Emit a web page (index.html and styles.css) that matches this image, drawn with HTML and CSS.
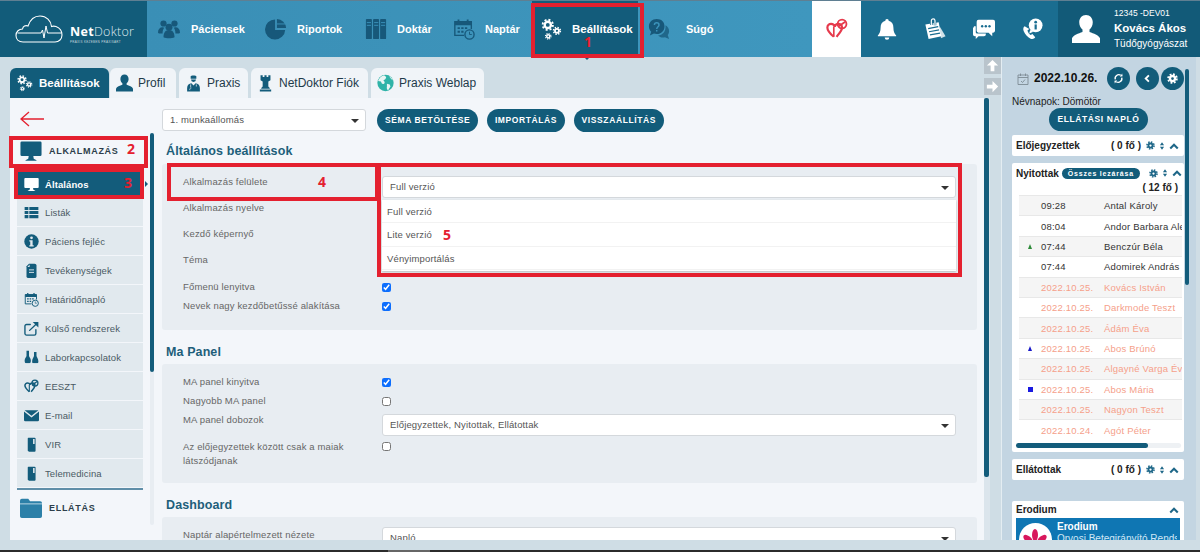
FILE: index.html
```html
<!DOCTYPE html>
<html lang="hu">
<head>
  <meta charset="UTF-8">
  <title>NetDoktor - Beállítások</title>
  <link rel="stylesheet" href="styles.css">
</head>
<body>
  <!-- icon set -->
  <svg class="defs" width="0" height="0">
    <symbol id="i-gears" viewBox="0 0 24 24">
      <g fill="none" stroke="currentColor">
        <circle cx="8.5" cy="7.5" r="3.4" stroke-width="2.6"/>
        <circle cx="8.5" cy="7.5" r="5.6" stroke-width="2" stroke-dasharray="2.2 2.2"/>
        <circle cx="18.5" cy="14" r="2.2" stroke-width="2"/>
        <circle cx="18.5" cy="14" r="3.8" stroke-width="1.6" stroke-dasharray="1.5 1.5"/>
        <circle cx="9" cy="20" r="1.7" stroke-width="1.6"/>
        <circle cx="9" cy="20" r="3" stroke-width="1.3" stroke-dasharray="1.2 1.16"/>
      </g>
    </symbol>
    <symbol id="i-people" viewBox="0 0 24 24">
      <g fill="currentColor">
        <circle cx="6" cy="6" r="3.4"/><circle cx="18" cy="6" r="3.4"/><circle cx="12" cy="10" r="3.8"/>
        <path d="M0 16c0-4 2-6 5-6l2 .6c-1.500 1.500-2 3.400-2 6.400H1zM24 16c0-4-2-6-5-6l-2 .6c1.500 1.500 2 3.400 2 6.400h4z"/>
        <path d="M6 21c0-5 2-8 6-8s6 3 6 8c-3 1.500-9 1.500-12 0z"/>
      </g>
    </symbol>
    <symbol id="i-pie" viewBox="0 0 24 24">
      <path fill="currentColor" d="M11 1.500a11 11 0 1 0 11 11.500H11zM13 1v10h10A10.500 10.500 0 0 0 13 1z"/>
      <path stroke="#3b93bb" stroke-width="1" d="M13 6.500h9"/>
    </symbol>
    <symbol id="i-binders" viewBox="0 0 24 24">
      <g fill="currentColor">
        <rect x="1" y="1" width="6.500" height="22" rx="1"/><rect x="8.800" y="1" width="6.500" height="22" rx="1"/><rect x="16.500" y="1" width="6.500" height="22" rx="1"/>
      </g>
      <path stroke="#3b93bb" stroke-width="1" d="M2 5h4.500M2 8h4.500M10 5h4.500M10 8h4.500M17.500 5H22M17.500 8H22"/>
    </symbol>
    <symbol id="i-cal" viewBox="0 0 24 24">
      <path fill="none" stroke="currentColor" stroke-width="1.500" d="M12 19H2V4h18v8"/>
      <path fill="currentColor" d="M2 4h18v4H2zM5 1.500h2V6H5zM15 1.500h2V6h-2zM5 10h2.500v2H5zM9 10h2.500v2H9zM13 10h2.500v2H13zM5 14h2.500v2H5zM9 14h2.500v2H9z"/>
      <circle cx="18" cy="18" r="5" fill="none" stroke="currentColor" stroke-width="1.500"/>
      <path fill="none" stroke="currentColor" d="M18 15v3h2.500"/>
    </symbol>
    <symbol id="i-help" viewBox="0 0 24 24">
      <path fill="currentColor" d="M9.500 1C4.500 1 1 4.500 1 9c0 2.500 1 4.500 2.500 6L2 19l4.500-2c1 .4 2 .5 3 .5 5 0 8.500-3.500 8.500-8.500S14.500 1 9.500 1z"/>
      <path fill="currentColor" opacity=".75" d="M19 8c2.500 1.500 4 3.500 4 6.500 0 1.500-.5 3-1.500 4L23 23l-4.500-2c-3 .8-6-.2-7.500-2 4.500 0 9-4 8-11z"/>
      <path fill="none" stroke="#3b93bb" stroke-width="1.600" d="M7 7.500C7 4.500 12 4.500 12 7.500c0 2-2.500 2-2.500 4.500M9.500 13v1.600"/>
    </symbol>
    <symbol id="i-heart" viewBox="0 0 24 24">
      <path fill="none" stroke="currentColor" stroke-width="2.400" d="M8.500 20.500C4 16.500 1.500 13.500 1.500 10.500 1.500 8 3.500 6.500 5.500 6.500s3.500 1 4 3c.5-2 2-3 4-3s4 1.500 4 4c0 3-3 6-6 10"/>
      <path fill="none" stroke="currentColor" stroke-width="1.800" d="M8.500 20.500v-11"/>
      <circle cx="17.500" cy="6.500" r="4.800" fill="none" stroke="currentColor" stroke-width="2"/>
      <path stroke="currentColor" stroke-width="2" d="M14 9l7-5"/>
    </symbol>
    <symbol id="i-bell" viewBox="0 0 24 24">
      <path fill="currentColor" d="M12 1a1.800 1.800 0 0 1 1.800 2C17.500 4 19 7 19 10.500c0 4 1 6.500 3 8.500v1H2v-1c2-2 3-4.500 3-8.500C5 7 6.500 4 10.200 3A1.800 1.800 0 0 1 12 1zM9.500 21.200h5a2.500 2.500 0 0 1-5 0z"/>
    </symbol>
    <symbol id="i-note" viewBox="0 0 24 24">
      <path fill="currentColor" opacity=".8" d="M17 9l6.500 11-5 2z"/>
      <path fill="currentColor" d="M1.500 7L16 4.500 19 20 5 23z"/>
      <path fill="none" stroke="#1a6d90" stroke-width="1.300" d="M4.500 11.500l11-2M5.500 15l11-2M6.500 18.500l11-2"/>
      <path fill="none" stroke="#1a6d90" stroke-width="2.800" d="M8 7.500V3a2 2 0 0 1 4 0v5"/>
      <path fill="none" stroke="currentColor" stroke-width="1.300" d="M8 7.500V3a2 2 0 0 1 4 0v5"/>
    </symbol>
    <symbol id="i-chat" viewBox="0 0 24 24">
      <path fill="currentColor" d="M6 2h16a2 2 0 0 1 2 2v10a2 2 0 0 1-2 2h-1v4l-4-4H6a2 2 0 0 1-2-2V4a2 2 0 0 1 2-2z"/>
      <path fill="currentColor" d="M1 9h2v6.500a1.500 1.500 0 0 0 1.500 1.500H14v1a2 2 0 0 1-2 2H6l-3 3v-3H2a2 2 0 0 1-2-2v-7a1 1 0 0 1 1-1z"/>
      <g fill="#1a6d90"><circle cx="10" cy="9" r="1.300"/><circle cx="14" cy="9" r="1.300"/><circle cx="18" cy="9" r="1.300"/></g>
    </symbol>
    <symbol id="i-phone" viewBox="0 0 24 24">
      <path fill="currentColor" d="M4 9c-1.500 1-2 3-1 5.500C4.500 18 7 21 10.500 22.500c2 .8 4 .3 5-1.500l-3-3.500-2 1C9 17.500 7.500 15.500 7 13.500l2-1.500z"/>
      <circle cx="16" cy="8" r="7.500" fill="currentColor"/>
      <path fill="currentColor" d="M10 13l-1 4 4.500-2z"/>
      <rect x="14.800" y="7" width="2.400" height="5.500" fill="#1a6d90"/><circle cx="16" cy="4.500" r="1.500" fill="#1a6d90"/>
    </symbol>
    <symbol id="i-user" viewBox="0 0 24 24">
      <path fill="currentColor" d="M12 0c3.500 0 5.800 2.600 5.800 6.300 0 2.700-1.200 5-2.800 6.200v2c3.500 1.200 8 2.800 9 5.500V24H0v-4c1-2.700 5.500-4.300 9-5.500v-2C7.400 11.300 6.200 9 6.200 6.300 6.200 2.600 8.500 0 12 0z"/>
    </symbol>
    <symbol id="i-doctor" viewBox="0 0 24 24">
      <path fill="currentColor" d="M8 2.500C8 1 16 1 16 2.500V6H8zM8.500 7h7a3.500 3.500 0 0 1-7 0zM3 24v-5c0-4 3-6 6-6.500l3 3 3-3c3 .5 6 2.500 6 6.500v5z"/>
      <path fill="none" stroke="#eef3f7" stroke-width="1" d="M8 14v4M16 14v3M7 22a2 2 0 0 1 2-3"/>
    </symbol>
    <symbol id="i-rook" viewBox="0 0 24 24">
      <path fill="currentColor" d="M5 1h3v2.500h2.500V1h3v2.500H16V1h3v7l-3 2v7l2 2v1H6v-1l2-2v-7L5 8zM4 21h16v3H4z"/>
    </symbol>
    <symbol id="i-globe" viewBox="0 0 24 24">
      <circle cx="12" cy="12" r="11.500" fill="#2fb3a8"/>
      <path fill="#e9f5f4" d="M10 1C6 2 3 5 1.500 9l4 1 1.500 3 3 .5 1-3-2-2 3-2 1-3zM14 13l4 1 1 3-3 5c-2 .5-2.500-3-2-5zM17 2.500l3 4 2.500 2C21.500 6 20 3.800 17 2.500z"/>
    </symbol>
    <symbol id="i-monitor" viewBox="0 0 24 24">
      <path fill="currentColor" d="M2 1.500h20a1.500 1.500 0 0 1 1.500 1.500v13a1.500 1.500 0 0 1-1.500 1.500H2A1.500 1.500 0 0 1 .5 16V3A1.500 1.500 0 0 1 2 1.500zM9.500 17.500h5l.5 3 3 1.500v.5H6V22l3-1.500z"/>
    </symbol>
    <symbol id="i-list" viewBox="0 0 24 24">
      <path fill="currentColor" d="M1 3h6v5H1zM8.500 3H23v5H8.500zM1 9.500h6v5H1zM8.500 9.500H23v5H8.500zM1 16h6v5H1zM8.500 16H23v5H8.500z"/>
    </symbol>
    <symbol id="i-info" viewBox="0 0 24 24">
      <circle cx="12" cy="12" r="11.500" fill="currentColor"/>
      <path fill="#e1e9ee" d="M10 10h3.800v8H15.500v2h-7v-2H10v-6H8.500v-2z"/><circle cx="12" cy="6" r="2.200" fill="#e1e9ee"/>
    </symbol>
    <symbol id="i-doc" viewBox="0 0 24 24">
      <path fill="currentColor" d="M8 1h9a3 3 0 0 1 3 3v17a3 3 0 0 1-3 3H7a3 3 0 0 1-3-3V5z"/>
      <path stroke="#e1e9ee" stroke-width="1.500" d="M8 11h8M8 15h8"/>
      <path fill="#e1e9ee" d="M9 2.500v4H5.500z"/>
    </symbol>
    <symbol id="i-link" viewBox="0 0 24 24">
      <path fill="none" stroke="currentColor" stroke-width="2.200" stroke-linecap="round" d="M19 14v6a2.500 2.500 0 0 1-2.500 2.500H4A2.500 2.500 0 0 1 1.500 20V8A2.500 2.500 0 0 1 4 5.500h6M9 15L21 3.500"/>
      <path fill="currentColor" d="M14 1.500h9v9z"/>
    </symbol>
    <symbol id="i-lab" viewBox="0 0 24 24">
      <path fill="currentColor" d="M4 1h4v8c0 2 3 4 3 8 0 4-2 5-5 5s-5-1-5-5c0-4 3-6 3-8zM16 3h4v6c0 2 3 5 3 9s-2 4-5 4-5 0-5-4 3-7 3-9z"/>
      <path fill="#e1e9ee" d="M0 22.500h24V21H0z"/>
    </symbol>
    <symbol id="i-mail" viewBox="0 0 24 24">
      <path fill="currentColor" d="M1 3.500h22L12 12.500zM0 5.500l12 9.500 12-9.500V19a2 2 0 0 1-2 2H2a2 2 0 0 1-2-2z"/>
    </symbol>
    <symbol id="i-device" viewBox="0 0 24 24">
      <path fill="currentColor" d="M7 1h10a1.500 1.500 0 0 1 1.500 1.500V22a1.500 1.500 0 0 1-1.500 1.500H8L6 22V2.500A1.500 1.500 0 0 1 7 1z"/>
      <path fill="#e1e9ee" d="M14.500 3H17v8h-2.500z"/>
    </symbol>
    <symbol id="i-folder" viewBox="0 0 24 24">
      <path fill="currentColor" d="M2 2h7l2 2.500h11A2 2 0 0 1 24 6.500V21a2 2 0 0 1-2 2H2a2 2 0 0 1-2-2V4a2 2 0 0 1 2-2z"/>
      <path stroke="#e9f5fb" stroke-width=".8" d="M0 7.500h24"/>
    </symbol>
    <symbol id="i-cog" viewBox="0 0 24 24">
      <g fill="none" stroke="currentColor">
        <circle cx="12" cy="12" r="5.500" stroke-width="5"/>
        <circle cx="12" cy="12" r="9.500" stroke-width="4" stroke-dasharray="4 3.460"/>
      </g>
    </symbol>
    <symbol id="i-sort" viewBox="0 0 12 24">
      <path fill="currentColor" d="M6 3l5 7H1zM6 21l-5-7h10z"/>
    </symbol>
    <symbol id="i-up" viewBox="0 0 24 24">
      <path fill="none" stroke="currentColor" stroke-width="5" d="M3 18l9-9 9 9"/>
    </symbol>
    <symbol id="i-sync" viewBox="0 0 24 24">
      <path fill="none" stroke="currentColor" stroke-width="3" d="M5 14a8 8 0 0 1 12-9M19 10a8 8 0 0 1-12 9"/>
      <path fill="currentColor" d="M15 8l6-1-1-6zM9 16l-6 1 1 6z"/>
    </symbol>
    <symbol id="i-today" viewBox="0 0 24 24">
      <path fill="none" stroke="currentColor" stroke-width="1.800" d="M2 4h20v19H2zM2 9h20M7 1v5M17 1v5M8 16l3 3 5-6"/>
    </symbol>
  </svg>

  <header class="topbar">
    <a class="logo">
      <svg class="logo-cloud" viewBox="0 0 48 28" width="48" height="28">
        <path fill="none" stroke="#fff" stroke-width="1.100" d="M8 27C3.500 27 1 24 1 20.500 1 16.500 4 14 7.500 14 8 11 10.500 10 13 11 15 5 19.500 1 25 1c6.500 0 11 5 11.500 10.500 1.500-.5 3-.5 4.500 0 4 1.500 6 5 6 8.500 0 4-3 7-7 7z"/>
        <path fill="none" stroke="#fff" stroke-width="1" d="M2.500 18H26l1.500-3 1.500 8 2-12 1.500 7H46"/>
      </svg>
      <span class="logo-text">
        <span class="logo-name"><b>Net</b>Doktor</span>
        <span class="logo-sub">PRAXIS KEZEBEN PRAXISÁRT</span>
      </span>
    </a>
    <nav class="mainnav">
      <a class="nav-item w-pac"><svg><use href="#i-people"/></svg>Páciensek</a>
      <a class="nav-item w-rip"><svg><use href="#i-pie"/></svg>Riportok</a>
      <a class="nav-item w-dok"><svg><use href="#i-binders"/></svg>Doktár</a>
      <a class="nav-item w-nap"><svg><use href="#i-cal"/></svg>Naptár</a>
      <a class="nav-item active"><svg><use href="#i-gears"/></svg>Beállítások</a>
      <a class="nav-item w-sug"><svg><use href="#i-help"/></svg>Súgó</a>
    </nav>
    <div class="heart-box"><svg><use href="#i-heart"/></svg></div>
    <div class="tools">
      <svg><use href="#i-bell"/></svg>
      <svg><use href="#i-note"/></svg>
      <svg><use href="#i-chat"/></svg>
      <svg><use href="#i-phone"/></svg>
    </div>
    <div class="user">
      <svg><use href="#i-user"/></svg>
      <div class="user-info">
        <span class="user-id">12345 -DEV01</span>
        <span class="user-name">Kovács Ákos</span>
        <span class="user-spec">Tüdőgyógyászat</span>
      </div>
    </div>
  </header>

  <div class="workspace">
    <section class="page">
      <div class="tabs">
        <a class="tab active t-1"><svg><use href="#i-gears"/></svg>Beállítások</a>
        <a class="tab t-2"><svg><use href="#i-user"/></svg>Profil</a>
        <a class="tab t-3"><svg><use href="#i-doctor"/></svg>Praxis</a>
        <a class="tab t-4"><svg><use href="#i-rook"/></svg>NetDoktor Fiók</a>
        <a class="tab t-5"><svg><use href="#i-globe"/></svg>Praxis Weblap</a>
      </div>
      <div class="panel">
        <aside class="sidebar">
          <svg class="back" viewBox="0 0 24 16" width="24" height="16"><path fill="none" stroke="#e4202f" stroke-width="1.300" d="M24 8H1M9 1L1 8l8 7"/></svg>
          <div class="group"><svg><use href="#i-monitor"/></svg>ALKALMAZÁS</div>
          <ul class="menu">
            <li class="selected"><svg><use href="#i-monitor"/></svg>Általános</li>
            <li><svg><use href="#i-list"/></svg>Listák</li>
            <li><svg><use href="#i-info"/></svg>Páciens fejléc</li>
            <li><svg><use href="#i-doc"/></svg>Tevékenységek</li>
            <li><svg><use href="#i-cal"/></svg>Határidőnapló</li>
            <li><svg><use href="#i-link"/></svg>Külső rendszerek</li>
            <li><svg><use href="#i-lab"/></svg>Laborkapcsolatok</li>
            <li><svg><use href="#i-heart"/></svg>EESZT</li>
            <li><svg><use href="#i-mail"/></svg>E-mail</li>
            <li><svg><use href="#i-device"/></svg>VIR</li>
            <li><svg><use href="#i-device"/></svg>Telemedicina</li>
          </ul>
          <div class="group group-last"><svg><use href="#i-folder"/></svg>ELLÁTÁS</div>
        </aside>
        <div class="side-scroll"><span></span></div>

        <main class="content">
          <div class="toolbar">
            <div class="select select-wide">1. munkaállomás</div>
            <a class="pill">SÉMA BETÖLTÉSE</a>
            <a class="pill">IMPORTÁLÁS</a>
            <a class="pill">VISSZAÁLLÍTÁS</a>
          </div>

          <h2>Általános beállítások</h2>
          <div class="box box-general">
            <div class="row"><label>Alkalmazás felülete</label>
              <div class="field">
                <div class="select">Full verzió</div>
                <ul class="dropdown">
                  <li>Full verzió</li>
                  <li>Lite verzió</li>
                  <li>Vényimportálás</li>
                </ul>
              </div>
            </div>
            <div class="row"><label>Alkalmazás nyelve</label></div>
            <div class="row"><label>Kezdő képernyő</label></div>
            <div class="row row-tall"><label>Téma</label></div>
            <div class="row row-check"><label>Főmenü lenyitva</label><input type="checkbox" checked></div>
            <div class="row row-check"><label>Nevek nagy kezdőbetűssé alakítása</label><input type="checkbox" checked></div>
          </div>

          <h2>Ma Panel</h2>
          <div class="box box-ma">
            <div class="row row-check"><label>MA panel kinyitva</label><input type="checkbox" checked></div>
            <div class="row row-check"><label>Nagyobb MA panel</label><input type="checkbox"></div>
            <div class="row row-select"><label>MA panel dobozok</label><div class="select">Előjegyzettek, Nyitottak, Ellátottak</div></div>
            <div class="row row-check row-two"><label class="two-line">Az előjegyzettek között csak a maiak látszódjanak</label><input type="checkbox"></div>
          </div>

          <h2>Dashboard</h2>
          <div class="box box-dash">
            <div class="row row-select"><label>Naptár alapértelmezett nézete</label><div class="select">Napló</div></div>
          </div>
        </main>
      </div>
    </section>

    <div class="arrows">
      <span class="arrow-btn"><svg viewBox="0 0 16 16"><path fill="#fff" d="M8 2l6 6h-4v6H6V8H2z"/></svg></span>
      <span class="arrow-btn"><svg viewBox="0 0 16 16"><path fill="#fff" d="M14 8l-6 6V10H2V6h6V2z"/></svg></span>
      <span class="page-scroll"><span></span></span>
    </div>

    <aside class="today">
      <div class="today-head">
        <svg class="today-cal"><use href="#i-today"/></svg>
        <span class="today-date">2022.10.26.</span>
        <a class="round r-1"><svg><use href="#i-sync"/></svg></a>
        <a class="round r-2"><svg viewBox="0 0 24 24"><path fill="none" stroke="currentColor" stroke-width="4" d="M15 5l-7 7 7 7"/></svg></a>
        <a class="round r-3"><svg><use href="#i-cog"/></svg></a>
      </div>
      <div class="nameday">Névnapok: Dömötör</div>
      <a class="pill pill-log">ELLÁTÁSI NAPLÓ</a>

      <div class="card card-head">
        <b class="card-title">Előjegyzettek</b><b class="count">( 0 fő )</b>
        <span class="card-icons"><svg class="cg"><use href="#i-cog"/></svg><svg class="st"><use href="#i-sort"/></svg><svg class="up"><use href="#i-up"/></svg></span>
      </div>

      <div class="card card-open">
        <div class="open-head">
          <b class="card-title">Nyitottak</b><a class="close-all">Összes lezárása</a>
          <span class="card-icons"><svg class="cg"><use href="#i-cog"/></svg><svg class="st"><use href="#i-sort"/></svg><svg class="up"><use href="#i-up"/></svg></span>
        </div>
        <div class="open-count"><b>( 12 fő )</b></div>
        <div class="patients">
          <div class="pat"><i></i><span>09:28</span><span>Antal Károly</span></div>
          <div class="pat"><i></i><span>08:04</span><span>Andor Barbara Alexandra</span></div>
          <div class="pat"><i class="tri green"></i><span>07:44</span><span>Benczúr Béla</span></div>
          <div class="pat"><i></i><span>07:44</span><span>Adomirek András</span></div>
          <div class="pat old"><i></i><span>2022.10.25.</span><span>Kovács István</span></div>
          <div class="pat old"><i></i><span>2022.10.25.</span><span>Darkmode Teszt</span></div>
          <div class="pat old"><i></i><span>2022.10.25.</span><span>Ádám Éva</span></div>
          <div class="pat old"><i class="tri blue"></i><span>2022.10.25.</span><span>Abos Brúnó</span></div>
          <div class="pat old"><i></i><span>2022.10.25.</span><span>Algayné Varga Éva</span></div>
          <div class="pat old"><i class="sq"></i><span>2022.10.25.</span><span>Abos Mária</span></div>
          <div class="pat old"><i></i><span>2022.10.25.</span><span>Nagyon Teszt</span></div>
          <div class="pat old"><i></i><span>2022.10.24.</span><span>Agót Péter</span></div>
        </div>
        <div class="h-scroll"><span></span></div>
      </div>

      <div class="card card-head card-done">
        <b class="card-title">Ellátottak</b><b class="count">( 0 fő )</b>
        <span class="card-icons"><svg class="cg"><use href="#i-cog"/></svg><svg class="st"><use href="#i-sort"/></svg><svg class="up"><use href="#i-up"/></svg></span>
      </div>

      <div class="card card-ero">
        <div class="ero-head"><b class="card-title">Erodium</b><svg class="up"><use href="#i-up"/></svg></div>
        <div class="ero-body">
          <span class="ero-logo">
            <svg viewBox="0 0 24 24" width="24" height="24"><g fill="#d8175c"><ellipse cx="12" cy="6" rx="3" ry="6"/><ellipse cx="5" cy="10" rx="3" ry="5.500" transform="rotate(-50 5 10)"/><ellipse cx="19" cy="10" rx="3" ry="5.500" transform="rotate(50 19 10)"/></g></svg>
          </span>
          <div class="ero-text"><b>Erodium</b><span>Orvosi Betegirányító Rendszer</span></div>
        </div>
      </div>
      <span class="today-scroll"></span>
    </aside>
  </div>

  <div class="bottom-strip"></div>
  <div class="taskbar"><span></span></div>

  <!-- red annotations drawn over the screenshot -->
  <div class="mark m-1"></div><span class="num n-1">1</span>
  <div class="mark m-2"></div><span class="num n-2">2</span>
  <div class="mark m-3"></div><span class="num n-3">3</span>
  <div class="mark m-4"></div><span class="num n-4">4</span>
  <div class="mark m-5"></div><span class="num n-5">5</span>
</body>
</html>
```

FILE: styles.css
```css
* {
  box-sizing: border-box;
}
html, body {
  height: 552px;
}
body {
  position: relative;
  margin: 0;
  overflow: hidden;
  font-family: 'Liberation Sans', Arial, sans-serif;
  font-size: 10px;
  color: #555;
  background-color: #cfdde5;
}
a {
  text-decoration: none;
}
ul {
  list-style: none;
  margin: 0;
  padding: 0;
}
.defs {
  position: absolute;
}

/* top bar */
.topbar {
  display: flex;
  height: 57px;
  border-top: 1px solid #5f7f92;
}
.logo {
  display: flex;
  align-items: center;
  gap: 7px;
  width: 147px;
  padding: 0 0 0 15px;
  background-color: #125c7a;
  color: #fff;
}
.logo-text {
  display: flex;
  flex-direction: column;
  gap: 1px;
  padding-top: 9px;
}
.logo-name {
  font-family: 'Open Sans', sans-serif;
  font-size: 12.500px;
  font-weight: 300;
  line-height: 15px;
  letter-spacing: .3px;
  color: #dfe9ee;
}
.logo-name b {
  font-weight: 700;
  color: #fff;
}
.logo-sub {
  font-size: 3px;
  line-height: 4px;
  letter-spacing: .3px;
  color: #c6d6de;
}
.mainnav {
  display: flex;
  width: 665px;
  padding-left: 11px;
  background: linear-gradient(90deg, #3a8fb6, #3f97be);
}
.nav-item {
  display: flex;
  align-items: center;
  gap: 11px;
  font-size: 11px;
  font-weight: 700;
  color: #fff;
}
.nav-item svg {
  width: 22px;
  height: 22px;
  color: #17587a;
}
.w-pac { width: 107px; }
.w-rip { width: 100px; gap: 10px; }
.w-dok { width: 88px; gap: 10px; }
.w-nap { width: 79px; gap: 10px; }
.w-sug { margin-left: 10px; gap: 16px; }
.nav-item.active {
  width: 106px;
  padding-left: 8px;
  gap: 10px;
  font-size: 11.500px;
  background-color: #135c7b;
}
.nav-item.active svg {
  color: #fff;
}
.nav-item.active::after {
  content: "";
  position: absolute;
  left: 584px;
  top: 57px;
  border: 3px solid transparent;
  border-top: 3px solid #135c7b;
}
.heart-box {
  display: flex;
  align-items: center;
  justify-content: center;
  width: 49px;
  background-color: #fff;
  color: #e63a4c;
}
.heart-box svg {
  width: 22px;
  height: 22px;
}
.tools {
  display: flex;
  align-items: center;
  justify-content: space-between;
  width: 197px;
  padding: 0 15px;
  background-color: #1a6d90;
  color: #fff;
}
.tools svg {
  width: 22px;
  height: 24px;
}
.user {
  display: flex;
  align-items: center;
  gap: 14px;
  flex: 1;
  padding-left: 14px;
  background-color: #125a78;
  color: #fff;
}
.user > svg {
  width: 28px;
  height: 30px;
}
.user-info {
  display: flex;
  flex-direction: column;
}
.user-id {
  font-size: 8.500px;
  line-height: 13px;
}
.user-name {
  font-size: 11.500px;
  line-height: 17px;
  font-weight: 700;
}
.user-spec {
  font-size: 10px;
  line-height: 14px;
}

/* left page */
.workspace {
  display: flex;
  height: 483px;
}
.page {
  width: 984px;
  padding: 11px 0 0 10px;
}
.tabs {
  display: flex;
  height: 30px;
}
.tab {
  display: flex;
  align-items: center;
  gap: 5px;
  margin-right: 3px;
  padding-left: 6px;
  border-radius: 6px 6px 0 0;
  font-size: 12px;
  color: #1e3a4a;
  background-color: #f0f4f8;
}
.tab svg {
  width: 17px;
  height: 18px;
  color: #135c7b;
}
.tab.active {
  margin-right: 1px;
  gap: 6px;
  font-size: 11.500px;
  color: #fff;
  font-weight: 700;
  background-color: #125c7a;
}
.tab.active svg {
  color: #fff;
}
.t-1 { width: 99px; }
.t-2 { width: 66px; }
.t-3 { width: 69px; }
.t-4 { width: 117px; }
.t-5 { width: 113px; }
.panel {
  display: flex;
  height: 442px;
  overflow: hidden;
  background-color: #f3f6fa;
}

/* settings menu */
.sidebar {
  width: 140px;
  padding: 13px 0 0 7px;
}
.back {
  display: block;
  margin-left: 3px;
}
.group {
  display: flex;
  align-items: center;
  gap: 7px;
  height: 24px;
  margin-top: 12px;
  padding-left: 3px;
  font-size: 9px;
  font-weight: 700;
  letter-spacing: .7px;
  color: #2d3e4a;
}
.group svg {
  width: 22px;
  height: 22px;
  color: #135c7b;
}
.menu {
  width: 126px;
  margin-top: 9px;
  border-bottom: 2px solid #5f8ea8;
}
.menu li {
  position: relative;
  display: flex;
  align-items: center;
  gap: 6px;
  height: 29px;
  padding-left: 7px;
  border-bottom: 1px solid #f3f6fa;
  font-size: 9.500px;
  letter-spacing: .1px;
  color: #4a5a64;
  background-color: #e1e9ee;
}
.menu li svg {
  width: 15px;
  height: 15px;
  color: #135c7b;
}
.menu li.selected {
  height: 25px;
  margin-bottom: 1px;
  border: 0;
  font-weight: 700;
  color: #fff;
  background-color: #135c7b;
}
.menu li.selected svg {
  color: #fff;
}
.menu li.selected::after {
  content: "";
  position: absolute;
  left: 128px;
  top: 9px;
  border: 3px solid transparent;
  border-left: 3px solid #135c7b;
}
.group-last {
  height: 36px;
  margin-top: 0;
}
.group-last svg {
  color: #2c80a8;
}
.side-scroll {
  width: 4px;
  height: 392px;
  margin-top: 35px;
  border-radius: 2px;
  background-color: #e8edf2;
}
.side-scroll span {
  display: block;
  height: 239px;
  border-radius: 2px;
  background-color: #135c7b;
}

/* settings content */
.content {
  width: 816px;
  padding: 11px 0 0 8px;
}
.toolbar {
  display: flex;
  align-items: flex-start;
  gap: 8.500px;
}
.select {
  position: relative;
  height: 22px;
  padding-left: 7px;
  border: 1px solid #d4d8dc;
  border-radius: 3px;
  font-size: 9.500px;
  line-height: 20px;
  letter-spacing: .15px;
  color: #555;
  background-color: #fff;
}
.select::after {
  content: "";
  position: absolute;
  right: 6px;
  top: 9px;
  border: 4px solid transparent;
  border-top: 4px solid #333;
}
.select-wide {
  width: 204px;
  margin-right: 2.500px;
}
.pill {
  display: inline-block;
  height: 23px;
  padding: 0 8px;
  border-radius: 12px;
  font-size: 8.500px;
  font-weight: 700;
  line-height: 22px;
  letter-spacing: .6px;
  white-space: nowrap;
  color: #fff;
  background-color: #125c7a;
}
h2 {
  height: 16px;
  margin: 14px 0 4px;
  padding-left: 4px;
  font-size: 12.500px;
  line-height: 16px;
  letter-spacing: .1px;
  color: #1e5f7a;
}
.toolbar + h2 {
  margin: 11px 0 5px;
}
.box {
  width: 815px;
  padding: 12px 0 0 21px;
  border-radius: 3px;
  background-color: #e8edf2;
}
.box-general { height: 166px; }
.box-ma { height: 119px; }
.box-dash { height: 40px; padding-top: 10px; }
.row {
  display: grid;
  grid-template-columns: 199px 574px;
  height: 26px;
}
.row label {
  font-size: 9.500px;
  line-height: 12px;
  letter-spacing: .15px;
  color: #666;
}
.row-tall {
  height: 27px;
}
.row-check {
  height: 19px;
}
.row-select {
  height: 27px;
}
.row-two {
  margin-top: -1px;
}
.box-dash label {
  padding-top: 2px;
}
.two-line {
  padding-right: 30px;
  line-height: 14px !important;
}
.row input {
  width: 9px;
  height: 9px;
  margin: 2px 0 0;
  accent-color: #0d6efd;
}
.field {
  position: relative;
}
.dropdown {
  position: absolute;
  left: 0;
  top: 24px;
  width: 574px;
  height: 71px;
  z-index: 2;
  box-shadow: 0 1px 2px #bbb;
  background-color: #fff;
}
.dropdown li {
  height: 23.300px;
  padding-left: 5px;
  border-bottom: 1px solid #f2f2f2;
  font-size: 9.500px;
  line-height: 24px;
  letter-spacing: .15px;
  color: #555;
}

/* arrows between page and day panel */
.arrows {
  display: flex;
  flex-direction: column;
  align-items: flex-start;
  width: 17px;
}
.arrow-btn {
  display: flex;
  width: 17px;
  height: 17px;
  margin-bottom: 4px;
  padding: 1px;
  background-color: #b9c4cc;
}
.page-scroll {
  flex: 1;
  width: 6px;
  margin-top: -1px;
  background-color: #dbe5ec;
}
.page-scroll span {
  display: block;
  width: 5px;
  height: 379px;
  border-radius: 2px;
  background-color: #135c7b;
}

/* day panel */
.today {
  position: relative;
  width: 195px;
  height: 483px;
  overflow: hidden;
  padding: 0 0 0 10px;
  border-left: 1px solid #e4edf2;
  background-color: #c3d5e2;
  color: #222;
}
.today-head {
  position: relative;
  display: flex;
  align-items: center;
  height: 43px;
  padding-left: 5px;
}
.today-cal {
  width: 12px;
  height: 14px;
  color: #7d8b94;
}
.today-date {
  margin-left: 5px;
  margin-top: -2px;
  font-size: 12px;
  font-weight: 700;
  color: #111;
}
.round {
  position: absolute;
  top: 10px;
  width: 23px;
  height: 23px;
  padding: 6px;
  border-radius: 50%;
  color: #fff;
  background-color: #125c7a;
}
.round svg {
  display: block;
  width: 11px;
  height: 11px;
}
.r-1 { left: 95px; }
.r-2 { left: 124px; }
.r-3 { left: 149px; }
.nameday {
  height: 12px;
  font-size: 10px;
  line-height: 12px;
  margin-top: -4px;
}
.pill-log {
  display: block;
  width: 99px;
  margin: 0 0 4px 37px;
  padding: 0;
  text-align: center;
}
.card {
  position: relative;
  width: 172px;
  margin-bottom: 7px;
  border-radius: 2px;
  background-color: #fff;
}
.card-head {
  display: flex;
  align-items: center;
  height: 21px;
  padding: 0 4px;
}
.card-title {
  font-size: 10px;
  color: #222;
}
.count {
  margin-left: auto;
  margin-right: 5px;
  font-size: 10px;
}
.card-icons {
  display: flex;
  align-items: center;
  gap: 4px;
  color: #1e6788;
}
.cg {
  width: 9px;
  height: 9px;
}
.st {
  width: 6px;
  height: 10px;
}
.up {
  width: 10px;
  height: 10px;
  margin-right: 1px;
  color: #1e6788;
}
.card-open {
  height: 289px;
  padding: 0 0 0 4px;
}
.open-head {
  display: flex;
  align-items: center;
  height: 20px;
}
.open-head .card-icons {
  margin-left: 9px;
}
.close-all {
  margin-left: 3px;
  padding: 0 6px;
  height: 11px;
  border-radius: 6px;
  font-size: 7px;
  font-weight: 700;
  line-height: 11px;
  letter-spacing: .8px;
  color: #fff;
  background-color: #125c7a;
}
.open-count {
  height: 12px;
  padding-right: 6px;
  font-size: 10px;
  line-height: 9px;
  text-align: right;
}
.patients {
  width: 163px;
  margin-left: 3px;
  overflow: hidden;
  border-top: 1px solid #e8e8e8;
}
.pat {
  display: grid;
  grid-template-columns: 22px 63px 110px;
  align-items: center;
  height: 20.400px;
  border-bottom: 1px solid #e8e8e8;
  font-size: 9.500px;
  letter-spacing: .2px;
  white-space: nowrap;
  color: #333;
}
.pat:nth-child(odd) {
  background-color: #f5f5f5;
}
.pat:last-child {
  border-bottom: 0;
}
.pat.old {
  color: #f5a08a;
}
.pat i {
  justify-self: center;
}
.tri {
  width: 0;
  height: 0;
  border: 2.500px solid transparent;
  border-top: 0;
  border-bottom: 5px solid #2e8b3a;
}
.tri.blue {
  border-bottom-color: #1a1ac8;
}
.sq {
  width: 5px;
  height: 5px;
  background-color: #1a1ae0;
}
.h-scroll {
  width: 165px;
  height: 5px;
  margin-top: 2px;
  border-radius: 3px;
  background-color: #eef1f4;
}
.h-scroll span {
  display: block;
  width: 132px;
  height: 5px;
  border-radius: 3px;
  background-color: #135c7b;
}
.card-done {
  height: 21px;
  margin-bottom: 21px;
}
.card-ero {
  padding: 0 4px;
  height: 60px;
}
.ero-head {
  display: flex;
  align-items: center;
  justify-content: space-between;
  height: 17px;
}
.ero-body {
  display: flex;
  gap: 5px;
  height: 40px;
  padding: 3px;
  color: #cfe6f5;
  background-color: #0f76b3;
}
.ero-logo {
  flex: none;
  width: 33px;
  height: 33px;
  margin-top: 2px;
  padding: 6px 4px;
  border-radius: 50%;
  background-color: #fff;
}
.ero-text {
  display: flex;
  flex-direction: column;
  overflow: hidden;
  white-space: nowrap;
  line-height: 12px;
}
.ero-text b {
  color: #fff;
}
.today-scroll {
  position: absolute;
  left: 183px;
  top: 12px;
  width: 4px;
  height: 216px;
  border-radius: 2px;
  background-color: #135c7b;
}

/* bottom of the window */
.bottom-strip {
  height: 10px;
}
.taskbar {
  height: 2px;
  background-color: #2b2b2b;
}
.taskbar span {
  display: block;
  width: 42px;
  height: 2px;
  margin-left: 388px;
  background-color: #666;
}

/* red annotations */
.mark {
  position: absolute;
  z-index: 5;
  border: 4px solid #e4202f;
}
.m-1 { left: 531px; top: 3px; width: 113px; height: 55px; }
.m-2 { left: 9px; top: 136px; width: 139px; height: 32px; }
.m-3 { left: 14px; top: 168px; width: 130px; height: 31px; }
.m-4 { left: 167px; top: 163px; width: 212px; height: 38px; }
.m-5 { left: 377px; top: 163px; width: 585px; height: 114px; }
.num {
  position: absolute;
  z-index: 6;
  font-family: 'Open Sans', sans-serif;
  font-size: 14px;
  font-weight: 700;
  line-height: 14px;
  color: #e4202f;
}
.n-1 { left: 584px; top: 36px; line-height: 12px; }
.n-2 { left: 127px; top: 142px; }
.n-3 { left: 124px; top: 176px; }
.n-4 { left: 318px; top: 175px; }
.n-5 { left: 443px; top: 228px; }
```
